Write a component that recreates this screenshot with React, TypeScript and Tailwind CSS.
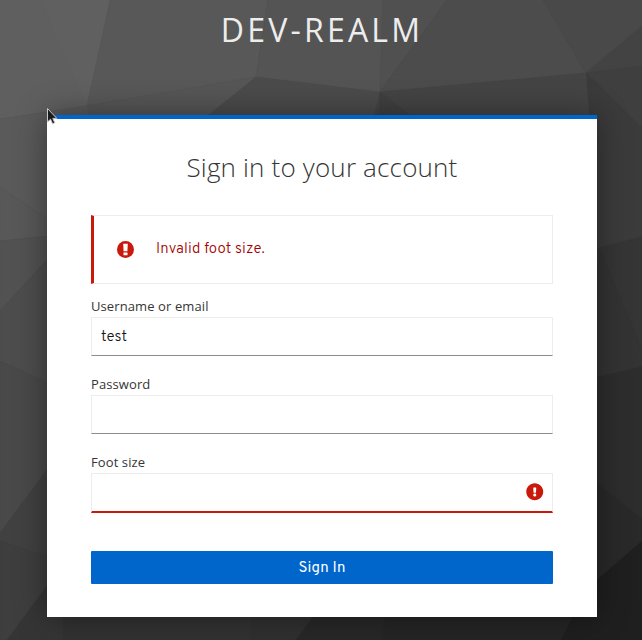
import React from "react";

type Facet = { points: string; fill: string };

const facets: Facet[] = [
  { points: "0,0 110,0 87,106 0,119", fill: "#5f5f5f" },
  { points: "40,0 110,0 87,106", fill: "#606060" },
  { points: "110,0 268,0 256,77 87,106", fill: "#585858" },
  { points: "268,0 383,0 380,92 256,77", fill: "#545454" },
  { points: "383,0 447,0 380,92", fill: "#505050" },
  { points: "447,0 543,0 586,73 380,92", fill: "#4c4c4c" },
  { points: "543,0 642,0 642,26 586,73", fill: "#494949" },
  { points: "642,26 642,66 586,73", fill: "#434343" },
  { points: "642,66 642,128 586,73", fill: "#3f3f3f" },
  { points: "586,73 642,128 642,237 597,248", fill: "#3b3b3b" },
  { points: "87,106 256,77 210,115 80,140", fill: "#565656" },
  { points: "256,77 380,92 371,130 190,130", fill: "#4b4b4b" },
  { points: "380,92 586,73 590,130 371,130", fill: "#444444" },
  { points: "380,92 410,115 410,130 380,130", fill: "#404040" },
  { points: "0,119 87,106 87,246 0,187", fill: "#5a5a5a" },
  { points: "0,187 87,246 87,232 0,241", fill: "#585858" },
  { points: "0,241 87,232 87,217 0,311", fill: "#525252" },
  { points: "0,311 87,217 87,400 0,361", fill: "#4d4d4d" },
  { points: "0,361 87,400 87,416 0,533", fill: "#494949" },
  { points: "0,533 87,416 87,569 0,541", fill: "#414141" },
  { points: "0,541 87,569 47,586 7,640 0,640", fill: "#3e3e3e" },
  { points: "7,640 47,586 80,560 253,615 247,640", fill: "#353535" },
  { points: "63,610 253,610 251,640 63,640", fill: "#323232" },
  { points: "253,610 251,640 296,640 318,610", fill: "#303030" },
  { points: "318,610 296,640 382,640 385,610", fill: "#282828" },
  { points: "385,610 382,640 561,640 576,610", fill: "#252525" },
  { points: "576,610 561,640 642,640 642,610", fill: "#1f1f1f" },
  { points: "590,250 642,237 642,367 590,379", fill: "#353535" },
  { points: "600,250 642,350 642,367 590,379", fill: "#333333" },
  { points: "590,379 642,367 642,519 590,478", fill: "#2d2d2d" },
  { points: "590,478 642,519 642,541 590,586", fill: "#292929" },
  { points: "590,586 642,541 642,640 590,640", fill: "#1f1f1f" },
];

function Backdrop() {
  return (
    <svg className="absolute inset-0 h-full w-full" viewBox="0 0 642 640" aria-hidden="true">
      {facets.map((f) => (
        <polygon key={f.points} points={f.points} fill={f.fill} stroke={f.fill} strokeWidth="0.4" />
      ))}
    </svg>
  );
}

function AlertIcon() {
  return (
    <svg viewBox="0 0 17 17" className="h-[17px] w-[17px] shrink-0" aria-hidden="true">
      <circle cx="8.5" cy="8.5" r="8.5" fill="#c9190b" />
      <path d="M6.2 2.8h4.6l-.4 7.4H6.6zM6.5 11.5h4v2.8h-4z" fill="#fff" />
    </svg>
  );
}

function ErrorIcon() {
  return (
    <svg viewBox="0 0 512 512" className="h-[17.5px] w-[17.5px] shrink-0 fill-[#c9190b]" aria-hidden="true">
      <path d="M504 256c0 136.997-111.043 248-248 248S8 392.997 8 256C8 119.083 119.043 8 256 8s248 111.083 248 248zm-248 50c-25.405 0-46 20.595-46 46s20.595 46 46 46 46-20.595 46-46-20.595-46-46-46zm-43.673-165.346l7.418 136c.347 6.364 5.609 11.346 11.982 11.346h48.546c6.373 0 11.635-4.982 11.982-11.346l7.418-136c.375-6.874-5.098-12.654-11.982-12.654h-63.383c-6.884 0-12.356 5.78-11.981 12.654z" />
    </svg>
  );
}

type FieldProps = { id: string; label: string; type?: string; value?: string; invalid?: boolean };

function Field({ id, label, type = "text", value = "", invalid = false }: FieldProps) {
  return (
    <div className="mb-[17px] h-[61px]">
      <label htmlFor={id} className="block h-[22px] text-[13px] leading-[22px] tracking-[0.1px] text-[#363636]">
        {label}
      </label>
      <div
        className={`flex items-center border border-[#ededed] pr-[8.5px] pl-[9px] ${
          invalid ? "h-[40px] border-b-2 border-b-[#c9190b] pb-px" : "h-[39px] border-b-[#8a8d90]"
        }`}
      >
        <input
          id={id}
          type={type}
          defaultValue={value}
          className="min-w-0 flex-1 bg-transparent pt-[3px] font-['Overpass','Noto_Sans',sans-serif] text-[15px] font-[350] tracking-[0.15px] text-[#151515] outline-none"
        />
        {invalid && <ErrorIcon />}
      </div>
    </div>
  );
}

export default function App() {
  return (
    <div className="relative h-[640px] w-[642px] overflow-hidden bg-[#444] font-['Open_Sans',sans-serif]">
      <Backdrop />
      <div className="relative flex flex-col">
        <header className="h-[115px] pt-[8px] pl-[2px] text-center text-[32px] leading-[44px] font-normal tracking-[3.2px] text-[#ededed]">
          DEV-REALM
        </header>
        <main className="ml-[47px] h-[502px] w-[550px] border-t-4 border-[#06c] bg-white px-[44px] shadow-[0_0_30px_rgba(0,0,0,0.4)]">
          <h1 className="h-[96px] pt-[30px] text-center text-[26px] leading-[36px] font-light tracking-[0.18px] text-[#363636]">
            Sign in to your account
          </h1>
          <div className="mb-[11px] flex h-[69px] items-center border border-l-[3px] border-[#ededed] border-l-[#c9190b] pl-[23px]">
            <AlertIcon />
            <span className="mt-px ml-[22px] font-['Overpass','Noto_Sans',sans-serif] text-[15px] font-[350] tracking-[0.15px] text-[#a30000]">
              Invalid foot size.
            </span>
          </div>
          <form onSubmit={(e) => e.preventDefault()}>
            <Field id="username" label="Username or email" value="test" />
            <Field id="password" label="Password" type="password" />
            <Field id="foot-size" label="Foot size" invalid />
            <button
              type="submit"
              className="mt-[39px] block h-[33px] w-full rounded-[1px] bg-[#06c] pt-[3px] font-['Overpass','Noto_Sans',sans-serif] text-[15px] font-normal tracking-[0.15px] text-white"
            >
              Sign In
            </button>
          </form>
        </main>
      </div>
      <svg className="absolute top-[107px] left-[46px] h-[19px] w-[13px]" viewBox="0 0 13 19" aria-hidden="true">
        <path d="M1.5 1.5V15l3-2.8 2.1 4.6 2.2-1-2-4.4h4Z" fill="#1c1c1c" stroke="#c8c8c8" strokeWidth="1" />
      </svg>
    </div>
  );
}
